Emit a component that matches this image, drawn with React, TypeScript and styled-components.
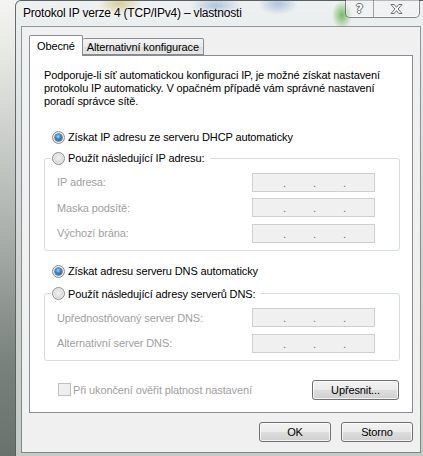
import React from 'react';
import styled, { createGlobalStyle } from 'styled-components';

const GlobalStyle = createGlobalStyle`
    html,
    body {
        margin: 0;
        padding: 0;
    }
    body {
        font-family: 'Liberation Sans', Arial, sans-serif;
        font-size: 11px;
        letter-spacing: -0.12px;
        color: #000;
        overflow: hidden;
    }
`;

const Desktop = styled.div`
    width: 423px;
    height: 456px;
    overflow: hidden;
    background: linear-gradient(180deg, #f4f4f1 0%, #e6e8e4 12%, #b4b9b4 45%, #79817b 80%, #6a726d 100%);
`;

const Window = styled.div`
    box-sizing: border-box;
    margin-left: 15px;
    width: 413px;
    height: 459px;
    border: 1px solid rgba(45, 50, 55, 0.7);
    border-radius: 6px 6px 0 0;
    padding: 0 7px 0 6px;
    background:
        radial-gradient(ellipse 22px 12px at 104px 3px, rgba(205, 196, 120, 0.75), transparent),
        radial-gradient(ellipse 26px 12px at 200px 5px, rgba(120, 160, 200, 0.55), transparent),
        radial-gradient(ellipse 20px 11px at 262px 3px, rgba(110, 150, 200, 0.5), transparent),
        radial-gradient(ellipse 10px 14px at 326px 14px, rgba(90, 170, 70, 0.8), transparent),
        linear-gradient(180deg, #eef1f1 0%, #dfe4e4 20%, #cfd4d1 60%, #c4cac6 100%);
`;

const TitleBar = styled.div`
    height: 26px;
    display: flex;
    align-items: flex-start;
    justify-content: space-between;
    margin-right: -7px;
    padding-right: 7px;
`;

const Title = styled.div`
    padding: 5px 0 0 1px;
    font-size: 12px;
    line-height: 15px;
    letter-spacing: -0.2px;
    text-shadow: 0 0 6px #fff, 0 0 3px #fff;
`;

const CaptionGroup = styled.div`
    display: flex;
    height: 17px;
    margin-top: -1px;
    border: 1px solid rgba(40, 40, 40, 0.55);
    border-top: none;
    border-radius: 0 0 5px 5px;
    box-shadow: inset 0 0 0 1px rgba(255, 255, 255, 0.45);
    background: rgba(255, 255, 255, 0.2);
    overflow: hidden;
`;

const CaptionButton = styled.div<{ $width: number }>`
    width: ${(p) => p.$width}px;
    display: flex;
    align-items: center;
    justify-content: center;
    & + & {
        border-left: 1px solid rgba(40, 40, 40, 0.4);
    }
`;

const HelpGlyph = styled.span`
    font-family: 'DejaVu Sans', sans-serif;
    font-weight: bold;
    font-size: 12px;
    line-height: 12px;
    color: #fff;
    text-shadow:
        1px 0 #6e6e6e,
        -1px 0 #6e6e6e,
        0 1px #6e6e6e,
        0 -1px #6e6e6e;
`;

const Client = styled.div`
    box-sizing: border-box;
    width: 398px;
    height: 425px;
    padding: 8px 7px 0 7px;
    background: #f0f0f0;
    box-shadow: 0 0 0 1px rgba(70, 80, 90, 0.55);
    display: flex;
    flex-direction: column;
`;

const TabStrip = styled.div`
    display: flex;
    align-items: flex-end;
    height: 20px;
    position: relative;
    z-index: 1;
`;

const Tab = styled.div<{ $active?: boolean }>`
    box-sizing: border-box;
    height: ${(p) => (p.$active ? 21 : 17)}px;
    margin-bottom: ${(p) => (p.$active ? -1 : 0)}px;
    padding: ${(p) => (p.$active ? '3px 7px 0' : '1px 4px 0')};
    border: 1px solid #898c95;
    border-bottom: ${(p) => (p.$active ? 'none' : '1px solid #898c95')};
    border-left: ${(p) => (p.$active ? '1px solid #898c95' : 'none')};
    border-radius: 2px 2px 0 0;
    background: ${(p) => (p.$active ? '#fff' : 'linear-gradient(180deg, #f3f3f3 0%, #ebebeb 50%, #dedede 51%, #e6e6e6 100%)')};
    line-height: 14px;
    white-space: nowrap;
`;

const Panel = styled.div`
    box-sizing: border-box;
    width: 384px;
    height: 358px;
    flex: none;
    padding: 12.5px 12px 0 14px;
    border: 1px solid #898c95;
    background: #fff;
    display: flex;
    flex-direction: column;
`;

const Intro = styled.p`
    margin: 0;
    line-height: 13px;
    span {
        display: block;
        white-space: nowrap;
    }
`;

const OptionRow = styled.label<{ $gap: number }>`
    display: flex;
    align-items: center;
    gap: 3px;
    height: 13px;
    line-height: 13px;
    margin-top: ${(p) => p.$gap}px;
    padding-left: 8px;
    white-space: nowrap;
`;

const RadioMark = styled.span<{ $checked?: boolean }>`
    box-sizing: border-box;
    width: 13px;
    height: 13px;
    flex: none;
    border-radius: 50%;
    border: 1px solid #8c8f91;
    background: radial-gradient(circle at 50% 45%, #f2f2f2 0%, #dedede 50%, #c4c4c4 100%);
    box-shadow: inset 0 0 0 1px rgba(255, 255, 255, 0.55);
    display: flex;
    align-items: center;
    justify-content: center;
    &::after {
        content: '';
        display: ${(p) => (p.$checked ? 'block' : 'none')};
        width: 7px;
        height: 7px;
        border-radius: 50%;
        background: radial-gradient(circle at 45% 35%, #a6dcf8 0%, #3a8bcb 40%, #1b4f82 100%);
        box-shadow: 0 0 0 0.5px #1d4670;
    }
`;

const Group = styled.fieldset<{ $gap: number }>`
    margin: ${(p) => p.$gap}px 0 0 0;
    padding: 0 0 7px 6px;
    min-width: 0;
    width: 356px;
    box-sizing: border-box;
    border: 1px solid #d5dce2;
    border-radius: 3px;
`;

const Legend = styled.legend`
    padding: 0 6px 0 1px;
    height: 15px;
    display: flex;
    align-items: center;
    gap: 3px;
    white-space: nowrap;
`;

const Rows = styled.div`
    display: flex;
    flex-direction: column;
    gap: 6.5px;
    padding: 7px 0 0 6px;
`;

const Row = styled.div`
    display: grid;
    grid-template-columns: 195px 123px;
    align-items: center;
    height: 19px;
`;

const DisabledLabel = styled.span`
    color: #a0a0a0;
    white-space: nowrap;
`;

const AddressField = styled.div`
    box-sizing: border-box;
    height: 19px;
    border: 1px solid #cfcfcf;
    background: #f0f0f0;
    display: flex;
    align-items: center;
    padding: 1px 0 0 30px;
    gap: 27px;
    color: #6d6d6d;
`;

const Dot = styled.span`
    width: 3px;
    text-align: center;
    line-height: 14px;
`;

const FooterRow = styled.div`
    display: flex;
    align-items: center;
    justify-content: space-between;
    width: 356px;
    margin-top: 19px;
    padding: 0 1px 0 14px;
    box-sizing: border-box;
`;

const CheckRow = styled.label`
    display: flex;
    align-items: center;
    gap: 2px;
    color: #a0a0a0;
    white-space: nowrap;
`;

const CheckMark = styled.span`
    box-sizing: border-box;
    width: 13px;
    height: 13px;
    border: 1px solid #c0c0c0;
    background: linear-gradient(135deg, #f2f2f2, #e9e9e9);
`;

const Button = styled.button<{ $width: number }>`
    box-sizing: border-box;
    width: ${(p) => p.$width}px;
    height: 20px;
    padding: 0;
    border: 1px solid #707070;
    border-radius: 3px;
    background: linear-gradient(180deg, #f2f2f2 0%, #ebebeb 48%, #dddddd 52%, #cfcfcf 100%);
    box-shadow: inset 0 0 0 1px rgba(255, 255, 255, 0.75);
    font: inherit;
    letter-spacing: inherit;
    color: #000;
    line-height: 16px;
`;

const ButtonBar = styled.div`
    display: flex;
    justify-content: flex-end;
    gap: 10px;
    margin-top: 9px;
`;

const AddressRow = ({ label }: { label: string }) => (
    <Row>
        <DisabledLabel>{label}</DisabledLabel>
        <AddressField>
            <Dot>.</Dot>
            <Dot>.</Dot>
            <Dot>.</Dot>
        </AddressField>
    </Row>
);

export default function App() {
    return (
        <>
            <GlobalStyle />
            <Desktop>
                <Window>
                    <TitleBar>
                        <Title>Protokol IP verze 4 (TCP/IPv4) – vlastnosti</Title>
                        <CaptionGroup>
                            <CaptionButton $width={27}>
                                <HelpGlyph>?</HelpGlyph>
                            </CaptionButton>
                            <CaptionButton $width={45}>
                                <svg width="13" height="10" viewBox="0 0 13 10">
                                    <path
                                        d="M1 0.5H4.2L6.5 3.3L8.8 0.5H12L8.1 5L12 9.5H8.8L6.5 6.7L4.2 9.5H1L4.9 5Z"
                                        fill="#fff"
                                        stroke="#6e6e6e"
                                        strokeWidth="1"
                                        strokeLinejoin="round"
                                    />
                                </svg>
                            </CaptionButton>
                        </CaptionGroup>
                    </TitleBar>
                    <Client>
                        <TabStrip>
                            <Tab $active>Obecné</Tab>
                            <Tab>Alternativní konfigurace</Tab>
                        </TabStrip>
                        <Panel>
                            <Intro>
                                <span>Podporuje-li síť automatickou konfiguraci IP, je možné získat nastavení</span>
                                <span>protokolu IP automaticky. V opačném případě vám správné nastavení</span>
                                <span>poradí správce sítě.</span>
                            </Intro>
                            <OptionRow $gap={23}>
                                <RadioMark $checked />
                                Získat IP adresu ze serveru DHCP automaticky
                            </OptionRow>
                            <Group $gap={7}>
                                <Legend>
                                    <RadioMark />
                                    Použít následující IP adresu:
                                </Legend>
                                <Rows>
                                    <AddressRow label="IP adresa:" />
                                    <AddressRow label="Maska podsítě:" />
                                    <AddressRow label="Výchozí brána:" />
                                </Rows>
                            </Group>
                            <OptionRow $gap={14.5}>
                                <RadioMark $checked />
                                Získat adresu serveru DNS automaticky
                            </OptionRow>
                            <Group $gap={8}>
                                <Legend>
                                    <RadioMark />
                                    Použít následující adresy serverů DNS:
                                </Legend>
                                <Rows>
                                    <AddressRow label="Upřednostňovaný server DNS:" />
                                    <AddressRow label="Alternativní server DNS:" />
                                </Rows>
                            </Group>
                            <FooterRow>
                                <CheckRow>
                                    <CheckMark />
                                    Při ukončení ověřit platnost nastavení
                                </CheckRow>
                                <Button $width={87}>Upřesnit...</Button>
                            </FooterRow>
                        </Panel>
                        <ButtonBar>
                            <Button $width={72}>OK</Button>
                            <Button $width={72}>Storno</Button>
                        </ButtonBar>
                    </Client>
                </Window>
            </Desktop>
        </>
    );
}
